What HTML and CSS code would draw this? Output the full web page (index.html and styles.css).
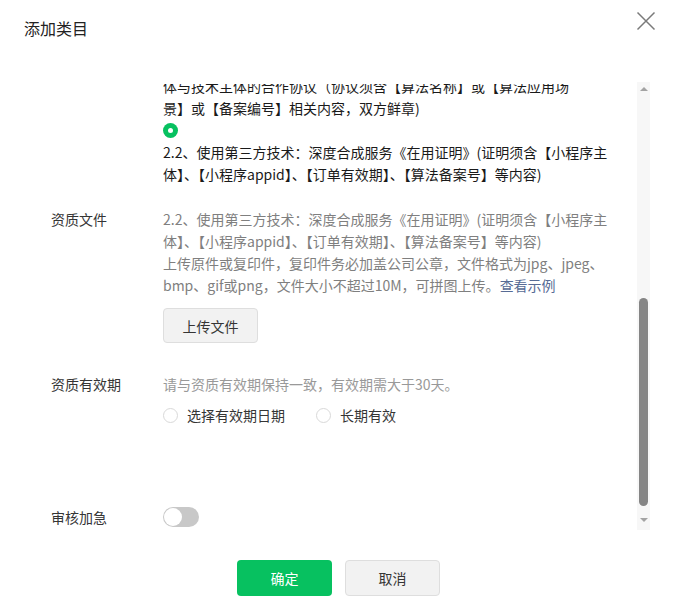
FILE: index.html
```html
<!DOCTYPE html>
<html lang="zh-CN">
<head>
<meta charset="utf-8">
<title>添加类目</title>
<link rel="stylesheet" href="styles.css">
</head>
<body>
<div class="dialog">
  <div class="dialog-header">
    <h1 class="dialog-title">添加类目</h1>
    <button class="close-btn" aria-label="关闭">
      <svg width="20" height="20" viewBox="0 0 20 20"><path d="M1.5 1.5 L18.5 18.5 M18.5 1.5 L1.5 18.5" stroke="#7a7a7a" stroke-width="1.5" fill="none"/></svg>
    </button>
  </div>

  <div class="scroll-area">
    <div class="scroll-view">
      <div class="scroll-inner">
        <div class="form-row first-row">
          <div class="form-label"></div>
          <div class="form-field">
            <p class="dark-text">体与技术主体的合作协议（协议须含【算法名称】或【算法应用场<br>景】或【备案编号】相关内容，双方鲜章)</p>
            <div class="radio-line"><span class="radio checked"></span></div>
            <p class="dark-text">2.2、使用第三方技术：深度合成服务《在用证明》(证明须含【小程序主<br>体】、【小程序appid】、【订单有效期】、【算法备案号】等内容)</p>
          </div>
        </div>

        <div class="form-row file-row">
          <div class="form-label">资质文件</div>
          <div class="form-field">
            <p class="gray-text">2.2、使用第三方技术：深度合成服务《在用证明》(证明须含【小程序主<br>体】、【小程序appid】、【订单有效期】、【算法备案号】等内容)<br>上传原件或复印件，复印件务必加盖公司公章，文件格式为jpg、jpeg、<br>bmp、gif或png，文件大小不超过10M，可拼图上传。<a class="link" href="#">查看示例</a></p>
            <button class="upload-btn">上传文件</button>
          </div>
        </div>

        <div class="form-row date-row">
          <div class="form-label">资质有效期</div>
          <div class="form-field">
            <p class="hint-text">请与资质有效期保持一致，有效期需大于30天。</p>
            <div class="radio-group">
              <label class="radio-item"><span class="radio"></span>选择有效期日期</label>
              <label class="radio-item"><span class="radio"></span>长期有效</label>
            </div>
          </div>
        </div>

        <div class="form-row urgent-row">
          <div class="form-label">审核加急</div>
          <div class="form-field">
            <span class="switch"><span class="switch-knob"></span></span>
          </div>
        </div>
      </div>
    </div>
    <div class="scrollbar">
      <span class="arrow arrow-up"></span>
      <div class="scroll-track">
        <div class="scroll-thumb" style="margin-top: 199px; height: 208px;"></div>
      </div>
      <span class="arrow arrow-down"></span>
    </div>
  </div>

  <div class="dialog-footer">
    <button class="btn btn-primary">确定</button>
    <button class="btn btn-default">取消</button>
  </div>
</div>
</body>
</html>
```

FILE: styles.css
```css
* {
  box-sizing: border-box;
}

html, body {
  margin: 0;
  padding: 0;
  background: #ffffff;
}

body {
  font-family: "Noto Sans CJK SC", "Noto Sans", sans-serif;
  font-size: 14px;
  color: #353535;
}

.dialog {
  width: 677px;
  height: 609px;
  display: flex;
  flex-direction: column;
}

.dialog-header {
  height: 84px;
  display: flex;
  justify-content: space-between;
  align-items: flex-start;
  padding: 0 21px 0 24px;
}

.dialog-title {
  margin: 18px 0 0;
  font-size: 16px;
  font-weight: 400;
  line-height: 20px;
  color: #222222;
}

.close-btn {
  margin-top: 11px;
  width: 20px;
  height: 20px;
  padding: 0;
  border: 0;
  background: transparent;
  display: flex;
}

.scroll-area {
  height: 446px;
  display: flex;
  padding-right: 27px;
}

.scroll-view {
  flex: 1;
  overflow: hidden;
}

.scroll-inner {
  margin-top: -9px;
  padding-left: 51px;
}

.form-row {
  display: grid;
  grid-template-columns: 112px 1fr;
  line-height: 22px;
}

.form-label {
  color: #353535;
}

.form-field p {
  margin: 0;
  white-space: nowrap;
}

.dark-text {
  color: #1a1a1a;
}

.gray-text {
  color: #7f7f7f;
}

.hint-text {
  color: #999999;
}

.link {
  color: #576b95;
  text-decoration: none;
}

.radio-line {
  height: 22px;
  display: flex;
  align-items: center;
}

.radio {
  display: inline-block;
  width: 15px;
  height: 15px;
  border-radius: 50%;
  border: 1px solid #d9d9d9;
  background: #ffffff;
  flex: none;
}

.radio.checked {
  border: 0;
  background: #07c160;
  position: relative;
}

.radio.checked::after {
  content: "";
  position: absolute;
  left: 5px;
  top: 5px;
  width: 5px;
  height: 5px;
  border-radius: 50%;
  background: #ffffff;
}

.file-row {
  margin-top: 23px;
}

.upload-btn {
  margin-top: 12px;
  width: 95px;
  height: 35px;
  border: 1px solid #dedede;
  border-radius: 4px;
  background: #f2f2f2;
  font-family: inherit;
  font-size: 14px;
  color: #353535;
  padding: 0;
}

.date-row {
  margin-top: 30px;
}

.radio-group {
  margin-top: 9px;
  display: flex;
  gap: 31px;
}

.radio-item {
  display: flex;
  align-items: center;
  gap: 9px;
  color: #353535;
}

.urgent-row {
  margin-top: 80px;
}

.urgent-row .form-field {
  display: flex;
  align-items: center;
}

.switch {
  width: 36px;
  height: 20px;
  border-radius: 10px;
  background: #c8c8c8;
  display: flex;
  align-items: center;
  padding: 1px;
}

.switch-knob {
  width: 18px;
  height: 18px;
  border-radius: 50%;
  background: #ffffff;
}

.scrollbar {
  width: 13px;
  display: flex;
  flex-direction: column;
  align-items: center;
  background: #f7f7f7;
  padding: 3px 0 4px;
  margin-top: -2px;
}

.arrow {
  width: 0;
  height: 0;
  border-left: 4px solid transparent;
  border-right: 4px solid transparent;
  flex: none;
}

.arrow-up {
  border-bottom: 4px solid #a3a3a3;
  margin: 2px 0 8px;
}

.arrow-down {
  border-top: 4px solid #a3a3a3;
  margin: 4px 0 4px;
}

.scroll-track {
  flex: 1;
  width: 100%;
  display: flex;
  flex-direction: column;
  align-items: center;
}

.scroll-thumb {
  width: 9px;
  border-radius: 5px;
  background: #858585;
}

.dialog-footer {
  display: flex;
  justify-content: center;
  gap: 13px;
  padding-top: 30px;
}

.btn {
  width: 95px;
  height: 36px;
  border-radius: 4px;
  font-family: inherit;
  font-size: 14px;
  padding: 0;
}

.btn-primary {
  background: #07c160;
  border: 0;
  color: #ffffff;
}

.btn-default {
  background: #f2f2f2;
  border: 1px solid #dedede;
  color: #353535;
}
```
